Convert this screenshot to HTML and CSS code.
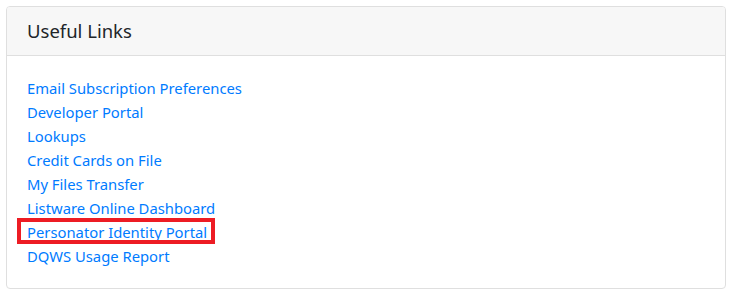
FILE: index.html
```html
<!DOCTYPE html>
<html lang="en">
<head>
<meta charset="utf-8">
<title>Useful Links</title>
<link rel="stylesheet" href="styles.css">
</head>
<body>
<div class="card">
  <div class="card-header">Useful Links</div>
  <div class="card-body">
    <ul class="links">
      <li><a href="#">Email Subscription Preferences</a></li>
      <li><a href="#">Developer Portal</a></li>
      <li><a href="#">Lookups</a></li>
      <li><a href="#">Credit Cards on File</a></li>
      <li><a href="#">My Files Transfer</a></li>
      <li><a href="#">Listware Online Dashboard</a></li>
      <li><a href="#" class="highlight">Personator Identity Portal</a></li>
      <li><a href="#">DQWS Usage Report</a></li>
    </ul>
  </div>
</div>
</body>
</html>
```
FILE: styles.css
```css
html, body {
  margin: 0;
  padding: 0;
  background: #fff;
}
body {
  padding: 6px;
  font-family: "Noto Sans", "Open Sans", sans-serif;
  font-size: 14.8px;
  line-height: 24px;
  color: #212529;
}
.card {
  width: 720px;
  box-sizing: border-box;
  border: 1px solid #dfdfdf;
  border-radius: 4px;
  background: #fff;
}
.card-header {
  background: #f7f7f7;
  border-bottom: 1px solid #dfdfdf;
  border-radius: 3px 3px 0 0;
  padding: 12px 20px;
  font-size: 18.5px;
  line-height: 24px;
  color: #212529;
}
.card-body {
  padding: 20px;
}
.links {
  list-style: none;
  margin: 0;
  padding: 0;
}
.links li {
  height: 24px;
}
.links a {
  color: #007bff;
  text-decoration: none;
}
.highlight {
  position: relative;
  display: inline-block;
  line-height: 24px;
  vertical-align: top;
}
.highlight::after {
  content: "";
  position: absolute;
  left: -10px;
  right: -8px;
  top: -2px;
  bottom: 0;
  border: 4px solid #ed1c24;
}
```
